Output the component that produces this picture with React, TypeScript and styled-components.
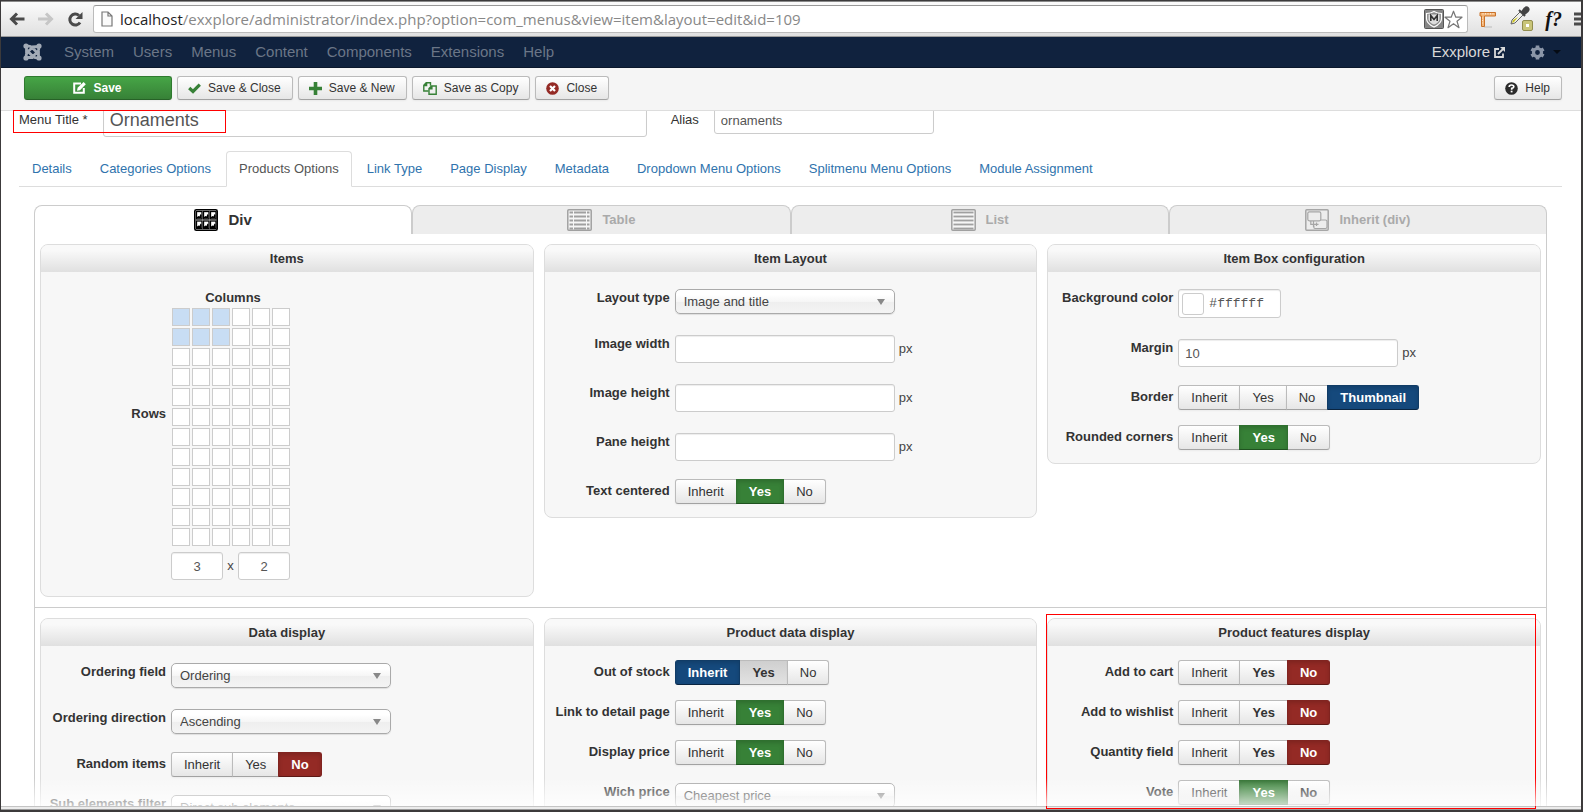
import React, { useId } from "react";
import styled, { createGlobalStyle, css } from "styled-components";

const SANS = `"Liberation Sans", Arial, sans-serif`;

const GlobalStyle = createGlobalStyle`
  *, *::before, *::after { box-sizing: border-box; }
  body { margin: 0; font: 13px/18px ${SANS}; color: #444; background: #fff; }
  button, input, select { font: inherit; color: inherit; margin: 0; }
  a { color: inherit; text-decoration: none; }
`;

/* ---------- window ---------- */

const Window = styled.div`
  position: relative;
  display: flex;
  flex-direction: column;
  height: 100vh;
  overflow: hidden;
  border: 2px solid #3c3a3b;
  border-top-width: 1px;
  border-left: 1px solid #3c3a3b;
  background: #fff;
`;

const BrowserBar = styled.header`
  flex: none;
  display: flex;
  align-items: center;
  height: 36px;
  padding: 0 0 0 8px;
  overflow: hidden;
  background: linear-gradient(#fbfbfb, #e0e0e0);
  border-top: 1px solid #8a8a8a;
  border-bottom: 1px solid #9c9c9c;
`;

const BrowserButton = styled.button`
  flex: none;
  display: flex;
  padding: 0;
  border: 0;
  background: none;
  margin-right: 12px;
  &:last-of-type { margin-right: 9px; }
`;

const AddressBar = styled.div`
  flex: 1;
  display: flex;
  align-items: center;
  height: 28px;
  padding: 0 4px 0 7px;
  background: #fff;
  border: 1px solid #bbb;
  border-top-color: #999;
  border-radius: 3px;
`;

const Url = styled.div`
  flex: 1;
  margin-left: 7px;
  font: 15px/24px "Open Sans", "Noto Sans", sans-serif;
  color: #888;
  white-space: nowrap;
  b { font-weight: 400; color: #222; }
`;

const Extensions = styled.div`
  flex: none;
  display: flex;
  align-items: center;
  gap: 12px;
  margin: 0 -9px 0 11px;
`;

const FontTool = styled.span`
  font: italic bold 20px/24px "Liberation Serif", serif;
  color: #111;
`;

/* ---------- admin bars ---------- */

const NavBar = styled.nav`
  flex: none;
  display: flex;
  align-items: center;
  height: 31px;
  padding: 0 20px 0 22px;
  background: #10223e;
  border-bottom: 1px solid #0b182c;
  font-size: 15px;
  color: #6b7687;
`;

const NavLinks = styled.div`
  flex: 1;
  display: flex;
  gap: 19px;
  margin-left: 22px;
`;

const SiteLink = styled.a`
  display: flex;
  align-items: center;
  gap: 4px;
  margin-right: 25px;
  color: #d9d9d9;
`;

const GearButton = styled.button`
  display: flex;
  align-items: center;
  gap: 8px;
  padding: 0;
  border: 0;
  background: none;
`;

const ToolBar = styled.div`
  flex: none;
  display: flex;
  align-items: flex-start;
  gap: 5px;
  height: 43px;
  padding: 8px 19px 0 23px;
  background: #f5f5f5;
  border-bottom: 1px solid #ddd;
`;

const ToolButton = styled.button<{ $primary?: boolean; $push?: boolean }>`
  display: flex;
  align-items: center;
  justify-content: center;
  gap: 7px;
  height: 24px;
  padding: 0 11px 0 10px;
  border: 1px solid #bbb;
  border-bottom-color: #a2a2a2;
  border-radius: 3px;
  background: linear-gradient(#fff, #e6e6e6);
  box-shadow: 0 1px 2px rgba(0, 0, 0, 0.05);
  font-size: 12px;
  line-height: 18px;
  color: #333;
  ${(p) => p.$push && css`margin-left: auto;`}
  ${(p) =>
    p.$primary &&
    css`
      width: 148px;
      background: linear-gradient(#46a546, #378137);
      border-color: #2f7a2f #2f7a2f #276227;
      color: #fff;
      font-weight: 700;
    `}
`;

/* ---------- form page ---------- */

const Viewport = styled.main`
  position: relative;
  flex: 1;
  min-height: 0;
  overflow: hidden;
  padding: 0 19px 0 18px;
  &::after {
    content: "";
    position: absolute;
    z-index: 2;
    left: 0;
    right: 0;
    bottom: 0;
    height: 28px;
    background: linear-gradient(rgba(255, 255, 255, 0), rgba(255, 255, 255, 0.75));
    pointer-events: none;
  }
`;

const StatusEdge = styled.footer`
  flex: none;
  height: 4px;
  background: #ececec;
  border-top: 1px solid #c4c4c4;
  border-bottom: 1px solid #9a9a9a;
`;

/* The form is scrolled, so the title row starts above the visible area. */
const TitleRow = styled.div`
  display: flex;
  align-items: center;
  height: 36px;
  margin-top: -9px;
  label { color: #333; }
`;

const boxed = css`
  border: 1px solid #ccc;
  border-radius: 3px;
  background: #fff;
  box-shadow: inset 0 1px 1px rgba(0, 0, 0, 0.075);
  color: #555;
`;

const TitleInput = styled.input`
  ${boxed}
  width: 544px;
  height: 34px;
  margin: 0 24px 0 15px;
  padding: 4px 6px;
  font-size: 18px;
`;

const TextInput = styled.input<{ $w?: number; $center?: boolean }>`
  ${boxed}
  width: ${(p) => p.$w ?? 220}px;
  height: 28px;
  padding: 4px 6px;
  ${(p) => p.$center && css`text-align: center;`}
`;

const AliasLabel = styled.label`
  margin-right: 15px;
`;

const PageTabs = styled.div`
  display: flex;
  gap: 2px;
  margin-top: 13px;
  border-bottom: 1px solid #ddd;
`;

const PageTab = styled.a<{ $active?: boolean }>`
  height: 36px;
  padding: 8px 12px;
  margin-bottom: -1px;
  border: 1px solid transparent;
  border-radius: 4px 4px 0 0;
  color: #2f73ad;
  white-space: nowrap;
  ${(p) =>
    p.$active &&
    css`
      background: #fff;
      border-color: #ddd #ddd #fff;
      color: #555;
    `}
`;

const Sheet = styled.section`
  margin: 18px 15px 0;
`;

const LayoutTabs = styled.div`
  display: grid;
  grid-template-columns: repeat(4, 1fr);
`;

const LayoutTab = styled.button<{ $active?: boolean }>`
  display: flex;
  align-items: center;
  justify-content: center;
  gap: 10px;
  height: 29px;
  padding: 0;
  border: 1px solid #ccc;
  border-bottom: 0;
  border-radius: 8px 8px 0 0;
  background: #ededed;
  color: #aaa;
  font-weight: 700;
  ${(p) =>
    p.$active &&
    css`
      background: #fff;
      color: #333;
      font-size: 15px;
    `}
`;

const PanelRow = styled.div`
  display: grid;
  grid-template-columns: repeat(3, 1fr);
  align-items: start;
  gap: 10px;
  padding: 10px 5px;
  border: 1px solid #ccc;
  border-top: 0;
  & + & { border-top: 0; }
`;

const PanelBox = styled.section`
  overflow: hidden;
  border: 1px solid #ddd;
  border-radius: 8px;
  background: #f7f7f7;
`;

const PanelTitle = styled.h3`
  margin: 0;
  padding: 5px 0 4px;
  background: linear-gradient(#f9f9f9 20%, #e0e0e0);
  font-size: 13px;
  line-height: 18px;
  text-align: center;
  color: #333;
`;

const PanelBody = styled.div`
  display: flex;
  flex-direction: column;
  gap: 15px;
  padding: 14px 0 13px;
`;

const FieldRow = styled.div`
  display: grid;
  grid-template-columns: 125px 1fr;
  column-gap: 5px;
`;

const FieldLabel = styled.label`
  font-weight: 700;
  line-height: 24px;
  text-align: right;
  white-space: nowrap;
  color: #333;
`;

const Control = styled.div`
  display: flex;
  align-items: center;
  gap: 4px;
  margin: 3px 0;
`;

const SelectBox = styled.div`
  position: relative;
  width: 220px;
  select {
    display: block;
    appearance: none;
    width: 100%;
    height: 25px;
    padding: 0 8px;
    border: 1px solid #aaa;
    border-radius: 5px;
    background: linear-gradient(#fff 20%, #f6f6f6 50%, #eee 52%, #f4f4f4 100%);
    box-shadow: 0 1px 1px rgba(0, 0, 0, 0.1);
    color: #444;
  }
  &::after {
    content: "";
    position: absolute;
    top: 10px;
    right: 10px;
    border: 4px solid transparent;
    border-top: 6px solid #888;
    border-bottom: 0;
    pointer-events: none;
  }
`;

const Group = styled.div`
  display: flex;
`;

type Tone = "plain" | "bold" | "pressed" | "green" | "red" | "blue";

const tones: Record<Tone, ReturnType<typeof css>> = {
  plain: css``,
  bold: css`font-weight: 700;`,
  pressed: css`
    font-weight: 700;
    background: linear-gradient(#cfcfcf, #e2e2e2);
  `,
  green: css`
    z-index: 1;
    font-weight: 700;
    color: #fff;
    background: #378137;
    border-color: #2f702f #2f702f #1f521f;
    box-shadow: inset 0 2px 4px rgba(0, 0, 0, 0.15);
  `,
  red: css`
    z-index: 1;
    font-weight: 700;
    color: #fff;
    background: #942a25;
    border-color: #802420 #802420 #5c1815;
    box-shadow: inset 0 2px 4px rgba(0, 0, 0, 0.15);
  `,
  blue: css`
    z-index: 1;
    font-weight: 700;
    color: #fff;
    background: #15497c;
    border-color: #113c66 #113c66 #0a2541;
    box-shadow: inset 0 2px 4px rgba(0, 0, 0, 0.15);
  `,
};

const Choice = styled.button<{ $tone: Tone }>`
  position: relative;
  height: 25px;
  padding: 0 12px;
  border: 1px solid #bbb;
  border-bottom-color: #a2a2a2;
  background: linear-gradient(#fff, #e6e6e6);
  box-shadow: 0 1px 2px rgba(0, 0, 0, 0.05);
  line-height: 18px;
  color: #333;
  & + & { margin-left: -1px; }
  &:first-child { border-radius: 3px 0 0 3px; }
  &:last-child { border-radius: 0 3px 3px 0; }
  ${(p) => tones[p.$tone]}
`;

const ColorInput = styled.div`
  ${boxed}
  display: flex;
  align-items: center;
  gap: 5px;
  width: 103px;
  height: 29px;
  padding: 0 3px;
  input {
    width: 66px;
    padding: 0;
    border: 0;
    outline: 0;
    background: none;
    font: 13px/18px "Liberation Mono", monospace;
  }
`;

const Swatch = styled.span`
  flex: none;
  width: 22px;
  height: 22px;
  border: 1px solid #ccc;
  border-radius: 3px;
  background: #fff;
`;

const GridPicker = styled.div`
  display: grid;
  grid-template-columns: 125px 119px;
  column-gap: 5px;
`;

const ColumnsLabel = styled(FieldLabel)`
  grid-column: 2;
  height: 22px;
  padding-left: 5px;
  text-align: center;
`;

const RowsLabel = styled(FieldLabel)`
  align-self: center;
  padding-bottom: 26px;
`;

const Cells = styled.div`
  display: grid;
  grid-template-columns: repeat(6, 18px);
  grid-auto-rows: 18px;
  gap: 2px;
  justify-content: end;
`;

const Cell = styled.button<{ $on: boolean }>`
  padding: 0;
  border: 1px solid #ccc;
  background: ${(p) => (p.$on ? "#c8ddf4" : "#fff")};
`;

const SizeFields = styled.div`
  grid-column: 2;
  display: flex;
  justify-content: space-between;
  align-items: center;
  margin: 6px 0 3px;
`;

const TitleMark = styled.div`
  position: absolute;
  top: 109px;
  left: 12px;
  width: 213px;
  height: 23px;
  border: 1px solid #f00;
  pointer-events: none;
`;

const FeatureMark = styled.div`
  position: absolute;
  top: 613px;
  bottom: 1px;
  left: calc(66.67% - 8px);
  right: 45px;
  border: 1px solid #f00;
  pointer-events: none;
`;

/* ---------- icons ---------- */

const BackIcon = () => (
  <svg width="17" height="16" viewBox="0 0 17 16" fill="none" stroke="#4a4a4a" strokeWidth="3">
    <path d="M15.500 8H3M8 2.500L2.500 8 8 13.500" />
  </svg>
);
const ForwardIcon = () => (
  <svg width="17" height="16" viewBox="0 0 17 16" fill="none" stroke="#c6c6c6" strokeWidth="3">
    <path d="M0 8h13M8 2.500L13.500 8 8 13.500" />
  </svg>
);
const ReloadIcon = () => (
  <svg width="17" height="17" viewBox="0 0 17 17">
    <path d="M13 11.500A5.500 5.500 0 1 1 12 4.500" fill="none" stroke="#4a4a4a" strokeWidth="3" />
    <path d="M15.500 1v7h-7z" fill="#4a4a4a" />
  </svg>
);
const FileIcon = () => (
  <svg width="12" height="16" viewBox="0 0 12 16" fill="#fafafa" stroke="#777" strokeWidth="1.200">
    <path d="M1 1h6l4 4v10H1zM7 1v4h4" />
  </svg>
);
const ShieldIcon = () => (
  <svg width="20" height="20" viewBox="0 0 20 20">
    <rect x="0.500" y="0.500" width="19" height="19" rx="1" fill="#858585" stroke="#555" />
    <path d="M2.500 4.500q4 0 7.500-2 3.500 2 7.500 2v5q0 5-7.500 8.500-7.500-3.500-7.500-8.500z" fill="#8b8b8b" stroke="#fff" strokeWidth="1.200" />
    <path d="M4.500 5.500h11v5q-1 3.500-5.500 5-4.500-1.500-5.500-5z" fill="#ddd" />
    <path d="M6.800 12V6.500L10 10.500l3.200-4V12" fill="none" stroke="#333" strokeWidth="1.600" />
  </svg>
);
const StarIcon = () => (
  <svg width="19" height="19" viewBox="0 0 19 19" fill="#fff" stroke="#777" strokeWidth="1.200" strokeLinejoin="round">
    <path d="M9.500 1.200l2.300 6H18l-5 4 2 6.500-5.500-4-5.500 4 2-6.500-5-4h6.200z" />
  </svg>
);
const RulerIcon = () => (
  <svg width="18" height="17" viewBox="0 0 18 17">
    <path d="M5 16h8" stroke="#bbb" />
    <path d="M1 1.500h15.500v3.500H5.500v10.500H2.500V5H1z" fill="#f3b578" stroke="#c9722a" />
    <path d="M4 2v1.500M6.500 2v1.500M9 2v1.500M11.500 2v1.500M14 2v1.500M3 7h1M3 9.500h1M3 12h1" stroke="#fbe6cf" />
  </svg>
);
const DropperIcon = () => (
  <svg width="24" height="26" viewBox="0 0 24 26">
    <path d="M2 18l1-4 9-9 3 3-9 9z" fill="#f1f1ec" stroke="#666" />
    <path d="M3 17l1-3 5-3-4 5z" fill="#c8c120" />
    <path d="M10 4l6 6M12.500 6.500l3-4q2-2 3.500-.5t-.5 3.500l-3.500 3z" fill="#444" stroke="#444" strokeWidth="2" />
    <rect x="13.500" y="14.500" width="10" height="10" rx="1.500" fill="#c9c579" stroke="#918d4e" />
    <rect x="17" y="18" width="3" height="3" fill="#fff" />
  </svg>
);
const MenuIcon = () => (
  <svg width="16" height="14" viewBox="0 0 16 14" stroke="#4a4a4a" strokeWidth="3">
    <path d="M0 2h16M0 7h16M0 12h16" />
  </svg>
);
const JoomlaIcon = () => (
  <svg width="19" height="18" viewBox="0 0 19 18" fill="none" stroke="#a3abb7" strokeWidth="2.800">
    <path d="M3.500 10L3.500 3.500q3.500-1 6 1.500L13.500 9M9 4L15.500 3.500q1 3.500-1.500 6L9.500 13.500M15.500 8v6.500q-3.500 1-6-1.500L5.500 9M10 14.500H3.500q-1-3.500 1.500-6L9.500 4.500" />
    <g fill="#a3abb7" stroke="none">
      <circle cx="3" cy="3" r="2.600" /><circle cx="16" cy="3" r="2.600" />
      <circle cx="3" cy="15" r="2.600" /><circle cx="16" cy="15" r="2.600" />
    </g>
  </svg>
);
const OutIcon = () => (
  <svg width="11" height="11" viewBox="0 0 11 11" fill="none" stroke="#d9d9d9" strokeWidth="1.800">
    <path d="M5 2H1v8h8V6.500M4 7l5-5" />
    <path d="M6 0h5v5z" fill="#d9d9d9" stroke="none" />
  </svg>
);
const GearIcon = () => (
  <svg width="15" height="15" viewBox="0 0 15 15">
    <circle cx="7.500" cy="7.500" r="4" fill="none" stroke="#8b96a8" strokeWidth="3.200" />
    <g stroke="#8b96a8" strokeWidth="3.600">
      <path d="M7.500 0.500v3M7.500 11.500v3M1.400 4l2.600 1.500M11 9.500L13.600 11M1.400 11l2.600-1.500M11 5.500L13.600 4" />
    </g>
  </svg>
);
const CaretIcon = () => (
  <svg width="8" height="4" viewBox="0 0 8 4"><path d="M0 0h8L4 4z" fill="#050b14" /></svg>
);
const EditIcon = () => (
  <svg width="13" height="12" viewBox="0 0 13 12">
    <path d="M8 1.500H1.200v9.300h9.600V6" fill="none" stroke="#fff" strokeWidth="2" />
    <path d="M4 8.800l.6-3L10.600 0l2.200 2.200-5.800 6z" fill="#fff" />
  </svg>
);
const CheckIcon = () => (
  <svg width="13" height="11" viewBox="0 0 13 11" fill="none" stroke="#378137" strokeWidth="3.200">
    <path d="M1.200 5L5 8.500 11.800 1.700" />
  </svg>
);
const PlusIcon = () => (
  <svg width="13" height="13" viewBox="0 0 13 13" stroke="#378137" strokeWidth="3.600">
    <path d="M6.500 0v13M0 6.500h13" />
  </svg>
);
const CopyIcon = () => (
  <svg width="14" height="13" viewBox="0 0 14 13" strokeWidth="1.400" fill="none" stroke="#378137">
    <path d="M5.500 9H.8V3.200L3.200.8H7.500v3M3.600.8v2.800H.8" />
    <path d="M6 12.200V6.500L8.500 4h4.700v8.200zM8.900 4v2.800H6" />
  </svg>
);
const CancelIcon = () => (
  <svg width="13" height="13" viewBox="0 0 13 13">
    <circle cx="6.500" cy="6.500" r="6.300" fill="#942a25" />
    <path d="M4 4l5 5M9 4L4 9" stroke="#fff" strokeWidth="2.200" />
  </svg>
);
const HelpIcon = () => (
  <svg width="13" height="13" viewBox="0 0 13 13">
    <circle cx="6.500" cy="6.500" r="6.300" fill="#2b2b2b" />
    <path d="M4.200 5q0-2 2.300-2t2.300 1.800Q8.800 6 6.700 6.400v1.300" fill="none" stroke="#fff" strokeWidth="1.700" />
    <rect x="5.700" y="8.700" width="1.800" height="1.700" fill="#fff" />
  </svg>
);
const DivIcon = () => (
  <svg width="24" height="22" viewBox="0 0 24 22">
    <rect x="0.800" y="0.800" width="22.400" height="20.400" rx="1.500" fill="#fff" stroke="#000" strokeWidth="1.600" />
    {[2, 11.5].map((y) =>
      [2, 9, 16].map((x) => (
        <g key={`${x}-${y}`}>
          <rect x={x + 0.5} y={y + 0.5} width="5.500" height="7.500" fill="#fff" stroke="#000" strokeWidth="1.300" />
          <path d={`M${x + 1} ${y + 7.5}v-1.500l1.500-1 1 .5 1-2.500 1 1v3.500z`} fill="#000" />
        </g>
      ))
    )}
  </svg>
);
const LinesIcon = ({ split }: { split?: boolean }) => (
  <svg width="25" height="22" viewBox="0 0 25 22" fill="none" stroke="#a0a0a0">
    <rect x="0.800" y="0.800" width="23.400" height="20.400" rx="1" fill="#f6f6f6" strokeWidth="1.500" />
    {[3.5, 7.5, 11.5, 15.5, 19.5].map((y) => (
      <path
        key={y}
        d={split ? `M2.500 ${y}h3.500M7 ${y}h12M20 ${y}h2.500` : `M2.500 ${y}h20`}
        strokeWidth="1.800"
      />
    ))}
  </svg>
);
const InheritIcon = () => (
  <svg width="24" height="22" viewBox="0 0 24 22" fill="none" stroke="#a6a6a6" strokeWidth="1.200">
    <rect x="0.800" y="0.800" width="22.400" height="20.400" rx="1" strokeWidth="1.500" />
    <rect x="2.800" y="2.800" width="13" height="9" rx="1.500" />
    <path d="M16 11h4.500q1.500 0 1.500 1.500V18q0 1.500-1.500 1.500H10q-1.200 0-1.200-1.500v-1.500" />
    <path d="M5.800 12v3.300H10M8.500 12v6M11.500 13.500v3.500M10 15.300h3.500" />
  </svg>
);

/* ---------- parts ---------- */

function Panel({ title, children }: { title: string; children: React.ReactNode }) {
  return (
    <PanelBox>
      <PanelTitle>{title}</PanelTitle>
      <PanelBody>{children}</PanelBody>
    </PanelBox>
  );
}

function TextField({ label, value = "" }: { label: string; value?: string }) {
  const id = useId();
  return (
    <FieldRow>
      <FieldLabel htmlFor={id}>{label}</FieldLabel>
      <Control>
        <TextInput id={id} defaultValue={value} />
        <span>px</span>
      </Control>
    </FieldRow>
  );
}

function SelectField({ label, value }: { label: string; value: string }) {
  const id = useId();
  return (
    <FieldRow>
      <FieldLabel htmlFor={id}>{label}</FieldLabel>
      <Control>
        <SelectBox>
          <select id={id} defaultValue={value}>
            <option>{value}</option>
          </select>
        </SelectBox>
      </Control>
    </FieldRow>
  );
}

function ChoiceField({ label, choices }: { label: string; choices: [string, Tone][] }) {
  const id = useId();
  return (
    <FieldRow>
      <FieldLabel as="span" id={id}>{label}</FieldLabel>
      <Group role="group" aria-labelledby={id}>
        {choices.map(([text, tone]) => (
          <Choice key={text} type="button" $tone={tone} aria-pressed={["green", "red", "blue"].includes(tone)}>
            {text}
          </Choice>
        ))}
      </Group>
    </FieldRow>
  );
}

const yes: [string, Tone][] = [["Inherit", "plain"], ["Yes", "green"], ["No", "plain"]];
const no: [string, Tone][] = [["Inherit", "plain"], ["Yes", "bold"], ["No", "red"]];

const pageTabs = [
  "Details", "Categories Options", "Products Options", "Link Type", "Page Display",
  "Metadata", "Dropdown Menu Options", "Splitmenu Menu Options", "Module Assignment",
];

export default function App() {
  return (
    <Window>
      <GlobalStyle />
      <BrowserBar>
        <BrowserButton aria-label="Back"><BackIcon /></BrowserButton>
        <BrowserButton aria-label="Forward"><ForwardIcon /></BrowserButton>
        <BrowserButton aria-label="Reload"><ReloadIcon /></BrowserButton>
        <AddressBar>
          <FileIcon />
          <Url><b>localhost</b>/exxplore/administrator/index.php?option=com_menus&amp;view=item&amp;layout=edit&amp;id=109</Url>
          <ShieldIcon />
          <StarIcon />
        </AddressBar>
        <Extensions>
          <RulerIcon />
          <DropperIcon />
          <FontTool>f?</FontTool>
          <MenuIcon />
        </Extensions>
      </BrowserBar>

      <NavBar>
        <JoomlaIcon />
        <NavLinks>
          {["System", "Users", "Menus", "Content", "Components", "Extensions", "Help"].map((t) => (
            <a key={t} href="#">{t}</a>
          ))}
        </NavLinks>
        <SiteLink href="#">Exxplore <OutIcon /></SiteLink>
        <GearButton aria-label="Settings"><GearIcon /><CaretIcon /></GearButton>
      </NavBar>

      <ToolBar>
        <ToolButton $primary><EditIcon />Save</ToolButton>
        <ToolButton><CheckIcon />Save &amp; Close</ToolButton>
        <ToolButton><PlusIcon />Save &amp; New</ToolButton>
        <ToolButton><CopyIcon />Save as Copy</ToolButton>
        <ToolButton><CancelIcon />Close</ToolButton>
        <ToolButton $push><HelpIcon />Help</ToolButton>
      </ToolBar>

      <Viewport>
        <TitleRow>
          <label htmlFor="title">Menu Title *</label>
          <TitleInput id="title" defaultValue="Ornaments" />
          <AliasLabel htmlFor="alias">Alias</AliasLabel>
          <TextInput id="alias" defaultValue="ornaments" />
        </TitleRow>

        <PageTabs>
          {pageTabs.map((t) => (
            <PageTab key={t} href="#" $active={t === "Products Options"}>{t}</PageTab>
          ))}
        </PageTabs>

        <Sheet>
          <LayoutTabs>
            <LayoutTab $active><DivIcon />Div</LayoutTab>
            <LayoutTab><LinesIcon split />Table</LayoutTab>
            <LayoutTab><LinesIcon />List</LayoutTab>
            <LayoutTab><InheritIcon />Inherit (div)</LayoutTab>
          </LayoutTabs>

          <PanelRow>
            <Panel title="Items">
              <GridPicker>
                <ColumnsLabel htmlFor="columns">Columns</ColumnsLabel>
                <RowsLabel htmlFor="rows">Rows</RowsLabel>
                <Cells>
                  {Array.from({ length: 72 }, (_, i) => {
                    const col = i % 6;
                    const row = Math.floor(i / 6);
                    return <Cell key={i} $on={col < 3 && row < 2} aria-label={`${col + 1} x ${row + 1}`} />;
                  })}
                </Cells>
                <SizeFields>
                  <TextInput id="columns" $w={52} $center defaultValue="3" />
                  <span>x</span>
                  <TextInput id="rows" $w={52} $center defaultValue="2" />
                </SizeFields>
              </GridPicker>
            </Panel>

            <Panel title="Item Layout">
              <SelectField label="Layout type" value="Image and title" />
              <TextField label="Image width" />
              <TextField label="Image height" />
              <TextField label="Pane height" />
              <ChoiceField label="Text centered" choices={yes} />
            </Panel>

            <Panel title="Item Box configuration">
              <FieldRow>
                <FieldLabel htmlFor="bg">Background color</FieldLabel>
                <Control>
                  <ColorInput>
                    <Swatch />
                    <input id="bg" defaultValue="#ffffff" />
                  </ColorInput>
                </Control>
              </FieldRow>
              <TextField label="Margin" value="10" />
              <ChoiceField
                label="Border"
                choices={[["Inherit", "plain"], ["Yes", "plain"], ["No", "plain"], ["Thumbnail", "blue"]]}
              />
              <ChoiceField label="Rounded corners" choices={yes} />
            </Panel>
          </PanelRow>

          <PanelRow>
            <Panel title="Data display">
              <SelectField label="Ordering field" value="Ordering" />
              <SelectField label="Ordering direction" value="Ascending" />
              <ChoiceField label="Random items" choices={[["Inherit", "plain"], ["Yes", "plain"], ["No", "red"]]} />
              <SelectField label="Sub elements filter" value="Direct sub elements" />
            </Panel>

            <Panel title="Product data display">
              <ChoiceField label="Out of stock" choices={[["Inherit", "blue"], ["Yes", "pressed"], ["No", "plain"]]} />
              <ChoiceField label="Link to detail page" choices={yes} />
              <ChoiceField label="Display price" choices={yes} />
              <SelectField label="Wich price" value="Cheapest price" />
            </Panel>

            <Panel title="Product features display">
              <ChoiceField label="Add to cart" choices={no} />
              <ChoiceField label="Add to wishlist" choices={no} />
              <ChoiceField label="Quantity field" choices={no} />
              <ChoiceField label="Vote" choices={[["Inherit", "plain"], ["Yes", "green"], ["No", "bold"]]} />
            </Panel>
          </PanelRow>
        </Sheet>
      </Viewport>
      <StatusEdge />

      <TitleMark />
      <FeatureMark />
    </Window>
  );
}
